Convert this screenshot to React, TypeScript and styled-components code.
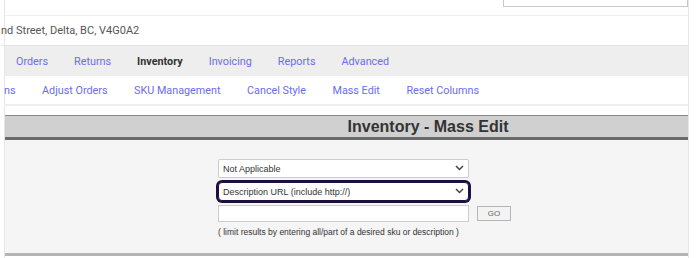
import React from "react";
import styled, { createGlobalStyle } from "styled-components";

const GlobalStyle = createGlobalStyle`
  html, body {
    margin: 0;
    padding: 0;
    background: #ffffff;
    font-family: Roboto, "Liberation Sans", sans-serif;
    overflow: hidden;
  }
`;

const Frame = styled.div`
  margin-left: 4px;
  width: 685px;
  min-height: 258px;
  box-sizing: border-box;
  border-left: 1px solid #e6e6e6;
  border-right: 1px solid #e6e6e6;
`;

const TopBar = styled.div`
  height: 15px;
  border-bottom: 1px solid #efefef;
  display: flex;
  justify-content: flex-end;
`;

const SearchBox = styled.div`
  width: 183px;
  height: 6px;
  border: 1px solid #c8c8c8;
  border-top: none;
  background: #fff;
`;

const AddressRow = styled.div`
  height: 29px;
  border-bottom: 1px solid #e4e4e4;
  display: flex;
  align-items: center;
  margin-left: -4px;
  font-size: 11px;
  color: #555;
`;

const NavBar = styled.div`
  height: 30px;
  background: #eeeeee;
  display: flex;
  align-items: center;
  gap: 26px;
  padding-left: 11px;
  font-size: 10.8px;
`;

const NavItem = styled.span<{ $active?: boolean }>`
  color: ${({ $active }) => ($active ? "#333333" : "#6a6cf0")};
  font-weight: ${({ $active }) => ($active ? 700 : 400)};
  cursor: pointer;
`;

const SubNav = styled.div`
  height: 28px;
  border-bottom: 2px solid #efefef;
  display: flex;
  align-items: center;
  gap: 26.5px;
  margin-left: -1px;
  font-size: 10.8px;
`;

const Spacer = styled.div`
  height: 9px;
`;

const Header = styled.div`
  height: 21px;
  border-top: 1px solid #8a8a8a;
  border-bottom: 3px solid #6b6b6b;
  background: #d0d0d0;
  display: flex;
  align-items: center;
  justify-content: center;
  padding-left: 163px;
  box-sizing: content-box;
`;

const Title = styled.h2`
  margin: 0;
  font-family: "Liberation Sans", Arial, sans-serif;
  font-size: 16px;
  font-weight: 700;
  color: #333333;
`;

const Content = styled.div`
  height: 94px;
  padding: 19px 0 0 213px;
  background: #f5f5f5;
  border-bottom: 3px solid #b5b5b5;
  display: flex;
  flex-direction: column;
  gap: 4px;
  font-family: "Liberation Sans", Arial, sans-serif;
`;

const SelectWrap = styled.div`
  position: relative;
  width: 251px;
`;

const Select = styled.select<{ $focused?: boolean }>`
  appearance: none;
  display: block;
  width: 251px;
  height: 19px;
  box-sizing: border-box;
  padding: 0 0 0 4px;
  font-family: "Liberation Sans", Arial, sans-serif;
  font-size: 9px;
  color: #333;
  background: #fff;
  border: 1px solid ${({ $focused }) => ($focused ? "#1d1040" : "#cccccc")};
  border-radius: ${({ $focused }) => ($focused ? "4px" : "2px")};
  box-shadow: ${({ $focused }) => ($focused ? "0 0 0 2px #1d1040" : "none")};
  outline: none;
`;

const Chevron = styled.svg`
  position: absolute;
  right: 5px;
  top: 6px;
  pointer-events: none;
`;

const InputRow = styled.div`
  display: flex;
  align-items: center;
  gap: 8px;
`;

const TextInput = styled.input`
  width: 251px;
  height: 17px;
  box-sizing: border-box;
  border: 1px solid #cccccc;
  background: #fff;
  margin: 0;
`;

const GoButton = styled.button`
  width: 34px;
  height: 15px;
  padding: 0;
  border: 1px solid #b5b5b5;
  background: #f3f3f3;
  color: #666;
  font-family: "Liberation Sans", Arial, sans-serif;
  font-size: 8px;
`;

const Help = styled.div`
  font-size: 8.5px;
  color: #333;
  margin-top: 1px;
`;

const Arrow = () => (
  <Chevron width="9" height="6" viewBox="0 0 9 6">
    <path d="M1 1 L4.5 4.5 L8 1" fill="none" stroke="#444" strokeWidth="1.5" />
  </Chevron>
);

const nav = ["Orders", "Returns", "Inventory", "Invoicing", "Reports", "Advanced"];
const subNav = ["ns", "Adjust Orders", "SKU Management", "Cancel Style", "Mass Edit", "Reset Columns"];

export default function App() {
  return (
    <>
      <GlobalStyle />
      <Frame>
        <TopBar>
          <SearchBox />
        </TopBar>
        <AddressRow>nd Street, Delta, BC, V4G0A2</AddressRow>
        <NavBar>
          {nav.map((n) => (
            <NavItem key={n} $active={n === "Inventory"}>
              {n}
            </NavItem>
          ))}
        </NavBar>
        <SubNav>
          {subNav.map((n) => (
            <NavItem key={n}>{n}</NavItem>
          ))}
        </SubNav>
        <Spacer />
        <Header>
          <Title>Inventory - Mass Edit</Title>
        </Header>
        <Content>
          <SelectWrap>
            <Select defaultValue="na">
              <option value="na">Not Applicable</option>
            </Select>
            <Arrow />
          </SelectWrap>
          <SelectWrap>
            <Select $focused defaultValue="url">
              <option value="url">Description URL (include http://)</option>
            </Select>
            <Arrow />
          </SelectWrap>
          <InputRow>
            <TextInput type="text" />
            <GoButton>GO</GoButton>
          </InputRow>
          <Help>( limit results by entering all/part of a desired sku or description )</Help>
        </Content>
      </Frame>
    </>
  );
}
